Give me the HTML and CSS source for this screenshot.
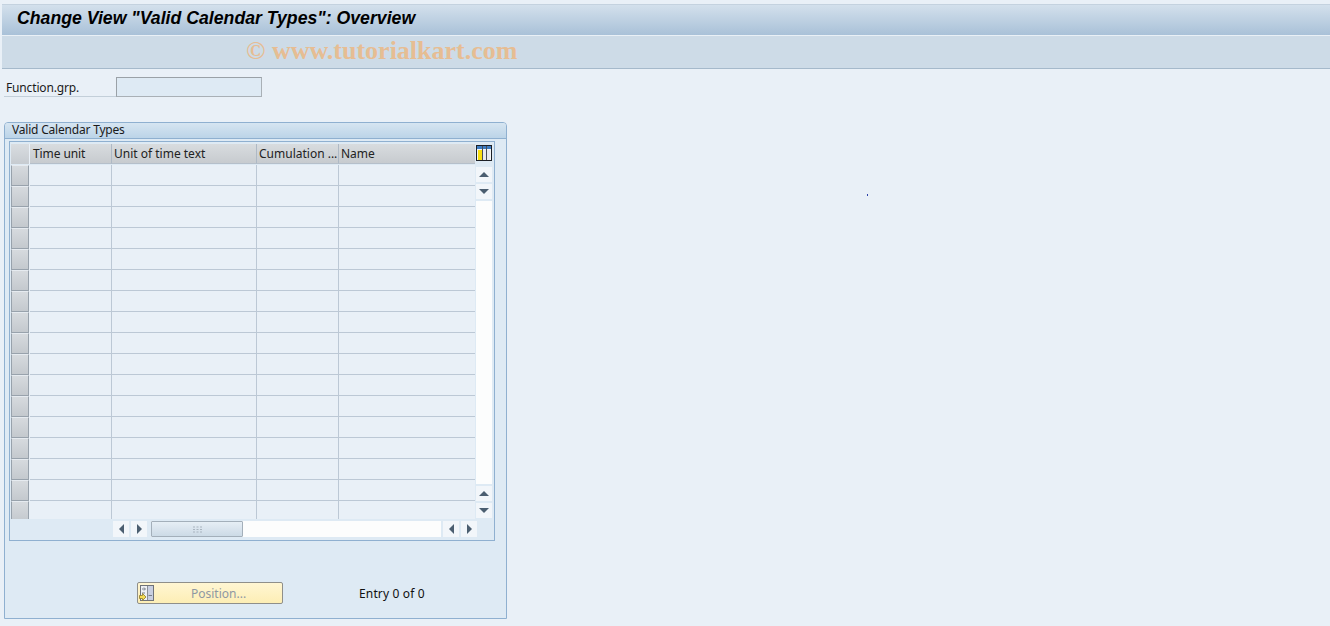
FILE: index.html
```html
<!DOCTYPE html>
<html>
<head>
<meta charset="utf-8">
<title>Change View</title>
<link rel="stylesheet" href="styles.css">
</head>
<body>
<header class="titlebar"><h1>Change View "Valid Calendar Types": Overview</h1></header>
<div class="toolbar"><span class="watermark">© www.tutorialkart.com</span></div>
<div class="field"><label>Function.grp.</label><div class="input"></div></div>
<section class="group">
  <div class="group-title">Valid Calendar Types</div>
  <div class="tc">
    <div class="tc-main">
      <div class="tc-left">
        <div class="hrow">
          <div class="corner"></div>
          <div class="hcell c1">Time unit</div>
          <div class="hcell c2">Unit of time text</div>
          <div class="hcell c3">Cumulation ...</div>
          <div class="hcell c4">Name</div>
        </div>
        <div class="rows">
          <div class="row"><div class="sel"></div><div class="cell c1"></div><div class="cell c2"></div><div class="cell c3"></div><div class="cell c4"></div></div>
          <div class="row"><div class="sel"></div><div class="cell c1"></div><div class="cell c2"></div><div class="cell c3"></div><div class="cell c4"></div></div>
          <div class="row"><div class="sel"></div><div class="cell c1"></div><div class="cell c2"></div><div class="cell c3"></div><div class="cell c4"></div></div>
          <div class="row"><div class="sel"></div><div class="cell c1"></div><div class="cell c2"></div><div class="cell c3"></div><div class="cell c4"></div></div>
          <div class="row"><div class="sel"></div><div class="cell c1"></div><div class="cell c2"></div><div class="cell c3"></div><div class="cell c4"></div></div>
          <div class="row"><div class="sel"></div><div class="cell c1"></div><div class="cell c2"></div><div class="cell c3"></div><div class="cell c4"></div></div>
          <div class="row"><div class="sel"></div><div class="cell c1"></div><div class="cell c2"></div><div class="cell c3"></div><div class="cell c4"></div></div>
          <div class="row"><div class="sel"></div><div class="cell c1"></div><div class="cell c2"></div><div class="cell c3"></div><div class="cell c4"></div></div>
          <div class="row"><div class="sel"></div><div class="cell c1"></div><div class="cell c2"></div><div class="cell c3"></div><div class="cell c4"></div></div>
          <div class="row"><div class="sel"></div><div class="cell c1"></div><div class="cell c2"></div><div class="cell c3"></div><div class="cell c4"></div></div>
          <div class="row"><div class="sel"></div><div class="cell c1"></div><div class="cell c2"></div><div class="cell c3"></div><div class="cell c4"></div></div>
          <div class="row"><div class="sel"></div><div class="cell c1"></div><div class="cell c2"></div><div class="cell c3"></div><div class="cell c4"></div></div>
          <div class="row"><div class="sel"></div><div class="cell c1"></div><div class="cell c2"></div><div class="cell c3"></div><div class="cell c4"></div></div>
          <div class="row"><div class="sel"></div><div class="cell c1"></div><div class="cell c2"></div><div class="cell c3"></div><div class="cell c4"></div></div>
          <div class="row"><div class="sel"></div><div class="cell c1"></div><div class="cell c2"></div><div class="cell c3"></div><div class="cell c4"></div></div>
          <div class="row"><div class="sel"></div><div class="cell c1"></div><div class="cell c2"></div><div class="cell c3"></div><div class="cell c4"></div></div>
          <div class="row last"><div class="sel"></div><div class="cell c1"></div><div class="cell c2"></div><div class="cell c3"></div><div class="cell c4"></div></div>
        </div>
      </div>
      <div class="tc-right">
        <svg class="config" width="16" height="16" viewBox="0 0 16 16"><rect x="0.5" y="0.5" width="15" height="15" fill="#f4f6f8" stroke="#1c2026"/><rect x="1" y="1" width="14" height="3" fill="#3d7cc2"/><rect x="2" y="5" width="4" height="10" fill="#f9e00f"/><rect x="7" y="5" width="3" height="10" fill="#e6ebef"/><rect x="11" y="5" width="3" height="10" fill="#e6ebef"/><path d="M6.5 1V15M10.5 1V15" stroke="#4a4f56"/></svg>
        <div class="vbar">
          <div class="sbtn"><span class="tri up"></span></div>
          <div class="sbtn"><span class="tri down"></span></div>
          <div class="vtrack"></div>
          <div class="sbtn"><span class="tri up"></span></div>
          <div class="sbtn"><span class="tri down"></span></div>
        </div>
      </div>
    </div>
    <div class="hbar">
      <div class="hbtn"><span class="tri left"></span></div>
      <div class="hbtn"><span class="tri right"></span></div>
      <div class="htrack">
        <div class="thumb"><svg width="9" height="7" viewBox="0 0 9 7"><path d="M0 1H2M3.500 1H5.500M7 1H9M0 3.500H2M3.500 3.500H5.500M7 3.500H9M0 6H2M3.500 6H5.500M7 6H9" stroke="#a9b4bf" stroke-width="1"/></svg></div>
      </div>
      <div class="hbtn"><span class="tri left"></span></div>
      <div class="hbtn"><span class="tri right"></span></div>
    </div>
  </div>
  <div class="actions">
    <div class="button">
      <svg class="button-icon" width="15" height="17" viewBox="0 0 15 17"><rect x="1.500" y="0.500" width="13" height="15" fill="#c9cfe0" stroke="#6f7278"/><rect x="2" y="1" width="6" height="14" fill="#eef0f4"/><path d="M8.500 1V15" stroke="#8a8f98"/><path d="M3 4H6M5 2.500L6.500 4L5 5.500M3 8H6M9.500 10.500H13" stroke="#7a808a" fill="none"/><path d="M0.500 10.500H3.500V8.500L7 12L3.500 15.500V13.500H0.500Z" fill="#f5dc55" stroke="#8d7a28" stroke-width="0.8"/></svg>
      <span class="button-label">Position...</span>
    </div>
    <span class="entry">Entry 0 of 0</span>
  </div>
</section>
<div class="dot"></div>
</body>
</html>
```
FILE: styles.css
```css
* { box-sizing: border-box; }
html, body { margin: 0; height: 100%; }
body {
  width: 1330px;
  height: 626px;
  overflow: hidden;
  background: #e9f0f7;
  font-family: "Noto Sans", "Open Sans", sans-serif;
  font-size: 12px;
  color: #1a1a1a;
  padding-top: 4px;
  position: relative;
}
.titlebar {
  height: 32px;
  margin-left: 2px;
  background: linear-gradient(#d3e0ec, #a9c1d8);
  border-top: 1px solid #c4d2df;
  border-bottom: 1px solid #e9f0f6;
  padding-left: 15px;
  display: flex;
  align-items: center;
}
h1 {
  margin: 0;
  font: italic bold 17.7px "Liberation Sans", Arial, sans-serif;
  color: #000;
  position: relative;
  top: -2px;
  white-space: nowrap;
}
.toolbar {
  height: 33px;
  margin-left: 2px;
  background: #cddbe7;
  border-bottom: 1px solid #a5b9cb;
  padding-left: 244px;
  display: flex;
  align-items: center;
}
.watermark {
  font: bold 26px "Liberation Serif", "Times New Roman", serif;
  color: #e6bd93;
  white-space: nowrap;
  position: relative;
  top: -1px;
}
.field {
  display: flex;
  margin: 8px 0 0 4px;
  height: 20px;
}
.field label {
  width: 112px;
  padding: 2px 0 0 2px;
  border-bottom: 1px solid #c3cfd9;
  line-height: 17px;
  font-size: 12px;
  letter-spacing: -0.15px;
}
.input {
  width: 146px;
  height: 20px;
  background: #deeaf4;
  border: 1px solid #a9b0b6;
  border-top-color: #9aa1a7;
  border-left-color: #9aa1a7;
}
.group {
  margin: 25px 0 0 4px;
  width: 503px;
  height: 497px;
  border: 1px solid #8fb0d0;
  border-top-left-radius: 4px;
  border-top-right-radius: 4px;
  background: #deeaf4;
  padding: 0 0 0 4px;
}
.group-title {
  height: 16px;
  margin-left: -4px;
  padding-left: 7px;
  background: linear-gradient(#d6e5f1, #bcd4e8);
  border-bottom: 1px solid #8fb0d0;
  line-height: 14px;
  font-size: 12px;
  letter-spacing: -0.2px;
  color: #1a1a1a;
  border-top-left-radius: 3px;
  border-top-right-radius: 3px;
}
.tc {
  margin-top: 2px;
  width: 486px;
  height: 400px;
  border: 1px solid #8fb0d0;
  padding: 2px 0 0 1px;
  display: flex;
  flex-direction: column;
}
.tc-main { display: flex; height: 375px; }
.tc-left { width: 464px; }
.hrow { display: flex; height: 21px; }
.corner {
  width: 19px;
  height: 20px;
  background: linear-gradient(#d9dde1, #c6cbd0);
  border-right: 1px solid #e9f0f7;
}
.hcell {
  height: 20px;
  background: linear-gradient(#d8dcdf, #c7cbcf);
  border-right: 1px solid #aeb9c5;
  border-bottom: 1px solid #b5bfca;
  line-height: 20px;
  padding-left: 2px;
  overflow: hidden;
  white-space: nowrap;
  font-size: 12px;
  color: #222;
}
.hcell.c1 { padding-left: 3px; letter-spacing: -0.1px; }
.c1 { width: 82px; }
.c2 { width: 145px; }
.c3 { width: 82px; }
.c4 { width: 136px; }
.hcell.c4 { border-right: 0; }
.rows { height: 354px; overflow: hidden; background: #e9f0f7; }
.row { display: flex; height: 21px; }
.sel {
  width: 18px;
  height: 21px;
  margin-right: 1px;
  background: linear-gradient(#d6dade, #c4c9ce);
  border: 1px solid #98a2ac;
  border-top-color: #e6ebf0;
}
.cell {
  height: 21px;
  border-right: 1px solid #bcc8d5;
  border-bottom: 1px solid #bcc8d5;
}
.cell.c4 { border-right: 0; }
.row.last .cell { border-bottom: 0; }
.tc-right { width: 18px; display: flex; flex-direction: column; }
.config { margin: 1px 0 0 1px; display: block; flex: none; }
.vbar {
  margin-top: 6px;
  display: flex;
  flex-direction: column;
  height: 351px;
  padding-left: 1px;
  gap: 2px;
}
.sbtn {
  width: 16px;
  height: 15px;
  background: #f2f6fa;
  display: flex;
  align-items: center;
  justify-content: center;
  flex: none;
}
.vtrack { flex: 1; background: #fcfdfd; width: 16px; }
.tri { width: 0; height: 0; display: block; border-style: solid; border-color: transparent; }
.tri.up { border-width: 0 5px 5px; border-bottom-color: #4b5e70; }
.tri.down { border-width: 5px 5px 0; border-top-color: #4b5e70; }
.tri.left { border-width: 5px 5px 5px 0; border-right-color: #4b5e70; }
.tri.right { border-width: 5px 0 5px 5px; border-left-color: #4b5e70; }
.hbar {
  display: flex;
  height: 16px;
  margin-top: 2px;
  margin-left: 102px;
  gap: 2px;
}
.hbtn {
  width: 16px;
  height: 16px;
  background: #f2f6fa;
  display: flex;
  align-items: center;
  justify-content: center;
  flex: none;
}
.htrack { width: 290px; height: 16px; background: #fcfdfd; margin-left: 2px; margin-right: 0; }
.thumb {
  width: 92px;
  height: 16px;
  background: linear-gradient(#e6eef5, #ccdae6);
  border: 1px solid #a3afba;
  border-radius: 1px;
  display: flex;
  align-items: center;
  justify-content: center;
}
.actions {
  display: flex;
  align-items: center;
  margin-top: 41px;
  margin-left: 128px;
  height: 22px;
}
.button {
  width: 146px;
  height: 22px;
  background: linear-gradient(#fff6d3, #fdeeb5);
  border: 1px solid #8f8f8a;
  border-radius: 2px;
  display: flex;
  align-items: center;
  position: relative;
  padding-left: 1px;
}
.button-icon { flex: none; }
.button-label { margin-left: 37px; color: #8f98a2; font-size: 12px; }
.entry { margin-left: 76px; color: #111; font-size: 12px; letter-spacing: 0.15px; }
.dot {
  position: absolute;
  left: 867px;
  top: 194px;
  width: 1px;
  height: 2px;
  background: #2b3fa8;
}
```
